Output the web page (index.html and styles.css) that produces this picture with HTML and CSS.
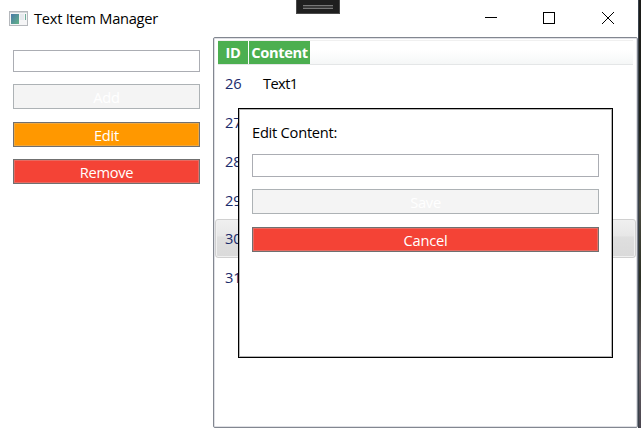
FILE: index.html
```html
<!DOCTYPE html>
<html lang="en">
<head>
<meta charset="utf-8">
<title>Text Item Manager</title>
<link rel="stylesheet" href="styles.css">
</head>
<body>
<div class="screen">
  <div class="window">
    <header class="titlebar">
      <svg class="app-icon" width="19" height="16" viewBox="0 0 19 16">
        <defs><linearGradient id="pane" x1="0" y1="0" x2="1" y2="1"><stop offset="0" stop-color="#4879a8"/><stop offset="1" stop-color="#63b387"/></linearGradient></defs>
        <rect x=".5" y=".5" width="18" height="14" fill="#f5f5f6" stroke="#b5b8bc"/>
        <rect x="1" y="1" width="17" height="1" fill="#d6d8db"/>
        <rect x="2" y="3" width="8" height="10" fill="url(#pane)"/>
        <rect x="11" y="3" width="4" height="6" fill="#e6e9ed"/>
        <rect x="16" y="3" width="1" height="6" fill="#6fae9a"/>
      </svg>
      <span class="title">Text Item Manager</span>
      <svg class="controls" width="130" height="14" viewBox="0 0 130 14" fill="none" stroke="#000" shape-rendering="crispEdges">
        <path d="M0 6.5H12"/>
        <rect x="58.5" y="1.5" width="11" height="11"/>
        <path d="M117 1L129 13M129 1L117 13" shape-rendering="auto"/>
      </svg>
    </header>
    <main class="content">
      <section class="form">
        <input class="field" type="text">
        <button class="btn off">Add</button>
        <button class="btn edit">Edit</button>
        <button class="btn danger">Remove</button>
      </section>
      <section class="list">
        <div class="head"><span class="th id">ID</span><span class="th text">Content</span></div>
        <div class="rows">
          <div class="row first"><span class="num">26</span><span class="value">Text1</span></div>
          <div class="row"><span class="num">27</span></div>
          <div class="row"><span class="num">28</span></div>
          <div class="row"><span class="num">29</span></div>
          <div class="row selected"><span class="num">30</span></div>
          <div class="row"><span class="num">31</span></div>
        </div>
      </section>
    </main>
  </div>
  <div class="desktop"></div>
  <div class="handle"><i></i></div>
  <div class="dialog">
    <label class="label">Edit Content:</label>
    <input class="field" type="text">
    <button class="btn off">Save</button>
    <button class="btn danger">Cancel</button>
  </div>
</div>
</body>
</html>
```
FILE: styles.css
```css
* { box-sizing: border-box; }
body { margin: 0; background: #fff; overflow: hidden; font-family: "Open Sans", "Noto Sans", sans-serif; font-size: 14.67px; color: #000; }
.screen { position: relative; display: flex; width: 641px; height: 428px; }
.window { width: 638px; height: 428px; display: flex; flex-direction: column; }
.desktop { width: 3px; background: linear-gradient(#1c1c19, #20231c 30%, #4a4a40 48%, #2c3024 65%, #686064 85%, #4a4650); border-left: 1px solid #39424c; }
.titlebar { height: 37px; display: flex; align-items: center; padding-left: 9px; }
.app-icon { margin-right: 6px; flex: none; }
.title { letter-spacing: -0.27px; line-height: 20px; padding-bottom: 2px; }
.controls { margin-left: auto; margin-right: 23px; margin-top: -2px; }
.content { display: flex; height: 391px; }
.form { width: 213px; padding: 13px 13px 0; display: flex; flex-direction: column; }
.field { display: block; width: 100%; height: 22px; border: 1px solid #abadb3; background: #fff; padding: 0; outline: none; flex: none; }
.btn { display: block; width: 100%; height: 25px; padding: 1px 0 0; border: 1px solid #707070; border-radius: 0; color: #fff; font: inherit; letter-spacing: -0.25px; line-height: 22px; flex: none; }
.form .field { width: 187px; }
.form .btn { width: 187px; margin-top: 12px; }
.form .btn.edit { margin-top: 13px; }
.btn.off { background: #f4f4f4; border-color: #adb2b5; }
.btn.edit { background: #ff9800; box-shadow: inset 0 0 0 1px #efa73d; }
.btn.danger { background: #f44336; box-shadow: inset 0 0 0 1px #e66b62; }
.list { width: 425px; height: 391px; border: 1px solid #828790; border-radius: 2px; box-shadow: inset 0 0 0 1px #dfe0e5; padding: 2px 1px; }
.head { height: 25px; margin: 0 3px; display: flex; gap: 1px; border-top: 1px solid #f0f0f0; border-bottom: 1px solid #e4e6e7; background: linear-gradient(#fff 40%, #f5f7f7); }
.th { height: 23px; background: #4caf50; color: #fff; font-weight: 700; line-height: 23px; text-align: center; letter-spacing: -0.4px; white-space: nowrap; }
.th.id { width: 30px; }
.th.text { width: 61px; }
.row { height: 38.6px; display: flex; align-items: center; padding: 0 0 0.8px 10px; }
.row.first { padding-bottom: 2px; }
.num { width: 38px; color: #1a2c6c; letter-spacing: -0.2px; }
.value { letter-spacing: -0.6px; }
.selected { border: 1px solid #d0d0d0; border-radius: 3px; box-shadow: inset 0 0 0 1px #f0f0f0; background: linear-gradient(#f0f0f0, #e7e7e7 44%, #dfdfdf 45%, #dadada); padding-left: 9px; }
.handle { position: absolute; left: 296px; top: 0; width: 44px; height: 14px; background: #1f1f1f; border: 1px solid #4b4b4b; border-top: 0; padding: 5px 6px; }
.handle i { display: block; height: 4px; border-top: 1px solid #777; border-bottom: 1px solid #777; background: #3a3a3a; }
.dialog { position: absolute; left: 238px; top: 108px; width: 375px; height: 250px; background: #fff; border: 1px solid #000; box-shadow: inset 0 0 0 1px #b5b5b5; padding: 13px; display: flex; flex-direction: column; }
.label { height: 32px; line-height: 20px; letter-spacing: -0.25px; }
.dialog .field { height: 23px; }
.dialog .btn { margin-top: 12px; }
.dialog .btn.danger { margin-top: 13px; padding: 0; }
```
